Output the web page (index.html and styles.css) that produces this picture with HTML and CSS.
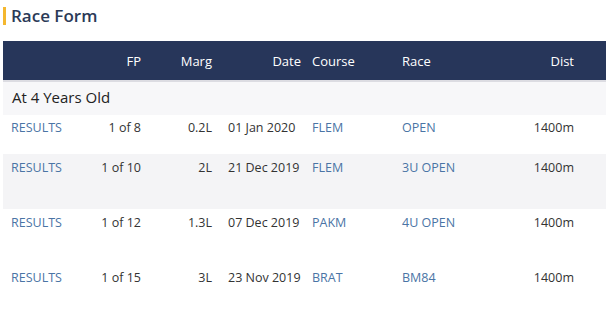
FILE: index.html
```html
<!DOCTYPE html>
<html lang="en">
<head>
  <meta charset="UTF-8">
  <title>Race Form</title>
  <link rel="stylesheet" href="styles.css">
</head>
<body>
  <div class="panel">
    <h2 class="panel-title">Race Form</h2>

    <table class="form-table">
      <colgroup>
        <col class="c-link">
        <col class="c-fp">
        <col class="c-marg">
        <col class="c-date">
        <col class="c-course">
        <col class="c-race">
        <col class="c-dist">
      </colgroup>
      <thead>
        <tr>
          <th></th>
          <th class="num">FP</th>
          <th class="num">Marg</th>
          <th class="num">Date</th>
          <th class="txt">Course</th>
          <th class="txt">Race</th>
          <th class="num dist">Dist</th>
        </tr>
      </thead>
      <tbody>
        <tr class="age-row">
          <td colspan="7">At 4 Years Old</td>
        </tr>
        <tr class="run short">
          <td class="link">RESULTS</td>
          <td class="num">1 of 8</td>
          <td class="num">0.2L</td>
          <td class="date">01 Jan 2020</td>
          <td class="link">FLEM</td>
          <td class="link">OPEN</td>
          <td class="num dist">1400m</td>
        </tr>
        <tr class="run alt">
          <td class="link">RESULTS</td>
          <td class="num">1 of 10</td>
          <td class="num">2L</td>
          <td class="date">21 Dec 2019</td>
          <td class="link">FLEM</td>
          <td class="link">3U OPEN</td>
          <td class="num dist">1400m</td>
        </tr>
        <tr class="run">
          <td class="link">RESULTS</td>
          <td class="num">1 of 12</td>
          <td class="num">1.3L</td>
          <td class="date">07 Dec 2019</td>
          <td class="link">PAKM</td>
          <td class="link">4U OPEN</td>
          <td class="num dist">1400m</td>
        </tr>
        <tr class="run">
          <td class="link">RESULTS</td>
          <td class="num">1 of 15</td>
          <td class="num">3L</td>
          <td class="date">23 Nov 2019</td>
          <td class="link">BRAT</td>
          <td class="link">BM84</td>
          <td class="num dist">1400m</td>
        </tr>
      </tbody>
    </table>
  </div>
</body>
</html>
```

FILE: styles.css
```css
:root {
  --navy: #27365a;
  --title: #2b3a57;
  --accent: #f4b72f;
  --link: #4a74a5;
  --text: #333;
  --stripe: #f4f4f6;
}

* {
  margin: 0;
  padding: 0;
  box-sizing: border-box;
}

body {
  font-family: "Open Sans", "Noto Sans", sans-serif;
  color: var(--text);
  background: white;
}

.panel {
  padding: 7px 2px 0 3px;
}

.panel-title {
  font-size: 17px;
  font-weight: 600;
  line-height: 18px;
  height: 18px;
  color: var(--title);
  border-left: 3px solid var(--accent);
  padding-left: 5px;
  margin-bottom: 16px;
}

.form-table {
  width: 603px;
  border-collapse: collapse;
  table-layout: fixed;
  font-size: 12.5px;
}

.c-link { width: 82px; }
.c-fp { width: 60px; }
.c-marg { width: 71px; }
.c-date { width: 89px; }
.c-course { width: 90px; }
.c-race { width: 105px; }
.c-dist { width: 106px; }

thead tr {
  background: var(--navy);
  height: 40px;
  border-bottom: 2px solid #dcdce2;
}

th {
  color: white;
  font-weight: 400;
  font-size: 13px;
  padding: 0 4px;
}

th.num {
  text-align: right;
}

th.txt {
  text-align: left;
  padding-left: 7px;
}

th.dist {
  padding-right: 32px;
}

.age-row td {
  background: #f7f7f9;
  height: 34px;
  font-size: 15px;
  font-weight: 500;
  color: #222;
  padding: 0 0 4px 9px;
}

.run td {
  height: 55px;
  vertical-align: top;
  padding: 5px 4px 0 7px;
  line-height: 18px;
  white-space: nowrap;
}

.run.short td {
  height: 39px;
  padding-top: 4px;
}

.run.alt td {
  background: var(--stripe);
}

.run td:first-child {
  padding-left: 8px;
}

.run td.link {
  color: var(--link);
}

.run td.num {
  text-align: right;
  padding-left: 0;
}

.run td.dist {
  padding-right: 32px;
}

.run td.date {
  padding-left: 12px;
}
```
